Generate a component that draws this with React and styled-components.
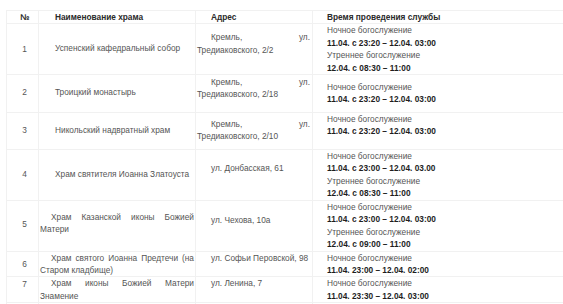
import React from 'react'
import styled, { createGlobalStyle } from 'styled-components'

const GlobalStyle = createGlobalStyle`
  html, body {
    margin: 0;
    padding: 0;
    background: #fff;
    overflow: hidden;
  }
  body {
    font-family: "Liberation Sans", Arial, sans-serif;
    font-size: 8.3px;
    line-height: 12.4px;
    color: #555;
  }
`

const services = [
  {
    num: '1', name: 'Успенский кафедральный собор', address: 'Кремль, ул. Тредиаковского, 2/2',
    height: 50, pad: [19, 18, 7, 0],
    times: [['Ночное богослужение', '11.04. с 23:20 – 12.04. 03:00'], ['Утреннее богослужение', '12.04. с 08:30 – 11:00']],
  },
  {
    num: '2', name: 'Троицкий монастырь', address: 'Кремль, ул. Тредиаковского, 2/18',
    height: 38, pad: [11, 11, 1, 6],
    times: [['Ночное богослужение', '11.04. с 23:20 – 12.04. 03:00']],
  },
  {
    num: '3', name: 'Никольский надвратный храм', address: 'Кремль, ул. Тредиаковского, 2/10',
    height: 37, pad: [11, 11, 5, 0],
    times: [['Ночное богослужение', '11.04. с 23:20 – 12.04. 03:00']],
  },
  {
    num: '4', name: 'Храм святителя Иоанна Златоуста', address: 'ул. Донбасская, 61',
    height: 51, pad: [18, 18, 12, 0],
    times: [['Ночное богослужение', '11.04. с 23:00 – 12.04. 03.00'], ['Утреннее богослужение', '12.04. с 08:30 – 11:00']],
  },
  {
    num: '5', name: 'Храм Казанской иконы Божией Матери', address: 'ул. Чехова, 10а', wide: true,
    height: 49, pad: [17, 10, 13, 0],
    times: [['Ночное богослужение', '11.04. с 23:00 – 12.04. 03:00'], ['Утреннее богослужение', '12.04. с 09:00 – 11:00']],
  },
  {
    num: '6', name: 'Храм святого Иоанна Предтечи (на Старом кладбище)', address: 'ул. Софьи Перовской, 98', wide: true,
    height: 25, pad: [6, 0, 0, 0],
    times: [['Ночное богослужение', '11.04. 23:00 – 12.04. 02:00']],
  },
  {
    num: '7', name: 'Храм иконы Божией Матери Знамение', address: 'ул. Ленина, 7', wide: true,
    height: 26, pad: [1, 0, 0, 0],
    times: [['Ночное богослужение', '11.04. 23:30 – 12.04. 03:00']],
  },
  {
    num: '', name: '', address: 'ул. Б. Советская, 2/7',
    height: 30, pad: [0, 0, 0, 0], centerAddress: true,
    times: [['Ночное богослужение', '11.04. 23:00 – 12.04. 03:00']],
  },
]

const Table = styled.table`
  border-collapse: collapse;
  table-layout: fixed;
  width: 557px;
  margin: 10px 0 0 6px;
`

const Row = styled.tr`
  height: ${p => p.$h}px;
`

const HeadCell = styled.th`
  border: 1px solid #f1f1f1;
  border-right-width: ${p => (p.$last ? 0 : 1)}px;
  padding: 0 0 0 ${p => p.$pl || 0}px;
  height: 12px;
  font-weight: bold;
  color: #2a2a2a;
  text-align: ${p => (p.$center ? 'center' : 'left')};
  vertical-align: top;
  white-space: nowrap;
`

const Cell = styled.td`
  border: 1px solid #f1f1f1;
  border-right-width: ${p => (p.$last ? 0 : 1)}px;
  vertical-align: top;
  padding: ${p => p.$pt || 0}px ${p => p.$pr || 0}px 0 ${p => p.$pl || 0}px;
  text-align: ${p => p.$align || 'left'};
`

const Para = styled.p`
  margin: 0;
  text-indent: ${p => p.$indent || 0}px;
  text-align: ${p => p.$align || 'justify'};
`

const Label = styled.div`
  color: #555;
`

const Time = styled.div`
  font-weight: bold;
  color: #1e1e1e;
`

export default function App() {
  return (
    <>
      <GlobalStyle />
      <Table>
        <colgroup>
          <col style={{ width: 32 }} />
          <col style={{ width: 157 }} />
          <col style={{ width: 117 }} />
          <col />
        </colgroup>
        <thead>
          <tr>
            <HeadCell $center $pl={4}>№</HeadCell>
            <HeadCell $pl={16}>Наименование храма</HeadCell>
            <HeadCell $pl={15}>Адрес</HeadCell>
            <HeadCell $pl={14} $last>Время проведения службы</HeadCell>
          </tr>
        </thead>
        <tbody>
          {services.map((s, i) => (
            <Row key={i} $h={s.height}>
              <Cell $pt={s.pad[0]} $pl={4} $align="center">{s.num}</Cell>
              <Cell $pt={s.pad[1]} $pl={s.wide ? 1 : 2} $pr={1}>
                <Para $indent={s.wide ? 11 : 14} $align={s.wide ? 'justify' : 'left'}>{s.name}</Para>
              </Cell>
              <Cell $pt={s.pad[2]} $pl={1} $pr={2}>
                <Para $indent={s.centerAddress ? 28 : 14}>{s.address}</Para>
              </Cell>
              <Cell $pt={s.pad[3]} $pl={14} $last>
                {s.times.map(([label, time]) => (
                  <React.Fragment key={label}>
                    <Label>{label}</Label>
                    <Time>{time}</Time>
                  </React.Fragment>
                ))}
              </Cell>
            </Row>
          ))}
        </tbody>
      </Table>
    </>
  )
}
